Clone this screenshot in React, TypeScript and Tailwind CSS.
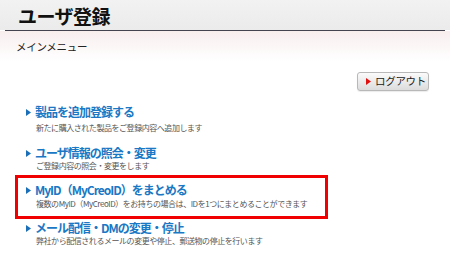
import React from "react";

type Item = { title: string; desc: string; boxed?: boolean; wrap: string; gap: string };

const items: Item[] = [
  {
    title: "製品を追加登録する",
    desc: "新たに購入された製品をご登録内容へ追加します",
    wrap: "ml-[15px] w-[313px] pl-[11px] mb-[13px]",
    gap: "mt-[4px]",
  },
  {
    title: "ユーザ情報の照会・変更",
    desc: "ご登録内容の照会・変更をします",
    wrap: "ml-[15px] w-[313px] pl-[11px] mb-[4px]",
    gap: "mt-[1px]",
  },
  {
    title: "MyID（MyCreoID）をまとめる",
    desc: "複数のMyID（MyCreoID）をお持ちの場合は、IDを1つにまとめることができます",
    boxed: true,
    wrap: "ml-[15px] w-[313px] border-[3px] border-[#f00000] pl-[8px] pt-[5px] pb-[7px] mb-[2px]",
    gap: "mt-[2px]",
  },
  {
    title: "メール配信・DMの変更・停止",
    desc: "弊社から配信されるメールの変更や停止、郵送物の停止を行います",
    wrap: "ml-[15px] w-[313px] pl-[11px]",
    gap: "mt-[1px]",
  },
];

function Tri({ color }: { color: string }) {
  return (
    <svg width="5" height="7" viewBox="0 0 5 7" className="shrink-0">
      <polygon points="0,0 5,3.5 0,7" fill={color} />
    </svg>
  );
}

export default function App() {
  return (
    <div
      className="w-[450px] h-[261px] overflow-hidden bg-white leading-none"
      style={{ fontFamily: '"Noto Sans CJK JP", "Noto Sans", sans-serif' }}
    >
      <div className="h-[30px] bg-gradient-to-b from-[#f2f2f2] to-[#ebebeb] flex items-center pl-[18px]">
        <span className="text-[19px] leading-none font-bold text-[#111] tracking-[-0.5px]">ユーザ登録</span>
      </div>
      <div className="mx-[5px] h-px bg-[#444450]" />
      <div className="bg-gradient-to-b from-[#f8eeee] to-white h-[30px] pl-[16px] pt-[11px]">
        <div className="text-[10.5px] leading-none text-[#222] tracking-[-0.3px]">メインメニュー</div>
      </div>
      <div className="flex justify-end pr-[21px] mt-[11px]">
        <div className="w-[72px] h-[19px] rounded-[3px] border border-[#b8b8b8] bg-gradient-to-b from-[#fbfbfb] to-[#dcdcdc] flex items-center pl-[8px] gap-[4px] whitespace-nowrap shadow-[0_1px_1px_rgba(0,0,0,0.08)]">
          <Tri color="#e01010" />
          <span className="text-[10.5px] leading-none text-[#222] tracking-[-0.3px]">ログアウト</span>
        </div>
      </div>
      <div className="mt-[14px] flex flex-col">
        {items.map((it, i) => (
          <div key={i} className={it.wrap}>
            <div className="flex items-center gap-[4px] h-[14px]">
              <Tri color="#1b6fb8" />
              <span className="text-[12px] leading-none font-bold text-[#1a78c4] tracking-[-1px] whitespace-nowrap">
                {it.title}
              </span>
            </div>
            <div
              className={`${it.gap} pl-[10px] h-[10px] text-[8px] leading-[10px] text-[#555] tracking-[-0.45px] whitespace-nowrap`}
            >
              {it.desc}
            </div>
          </div>
        ))}
      </div>
    </div>
  );
}
